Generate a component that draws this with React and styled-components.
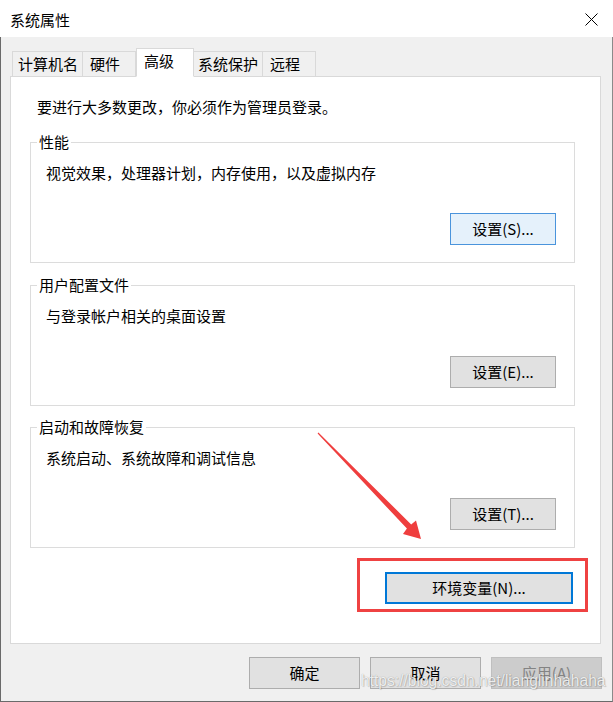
import React from "react";
import styled, { createGlobalStyle } from "styled-components";

const GlobalStyle = createGlobalStyle`
  html, body {
    margin: 0;
    padding: 0;
    background: #ffffff;
  }
  * {
    box-sizing: border-box;
  }
`;

const FONT = `"Noto Sans CJK SC", "Noto Sans", sans-serif`;

const Window = styled.div`
  position: relative;
  width: 613px;
  height: 702px;
  display: flex;
  flex-direction: column;
  font-family: ${FONT};
  font-size: 15px;
  color: #000;
  overflow: hidden;
`;

const TitleBar = styled.div`
  height: 37px;
  flex: none;
  display: flex;
  align-items: center;
  justify-content: space-between;
  padding: 2px 15px 0 10px;
  background: #ffffff;
  line-height: 20px;
`;

const Body = styled.div`
  flex: 1;
  display: flex;
  flex-direction: column;
  background: #f0f0f0;
  padding: 11px 11px 0 9px;
  border-left: 1px solid #6a6a6a;
  border-right: 1px solid #8a8a8a;
  border-bottom: 1px solid #6a6a6a;
`;

const TabRow = styled.div`
  display: flex;
  align-items: flex-end;
  height: 29px;
  margin: 0 0 -1px 2px;
  position: relative;
  z-index: 1;
`;

const Tab = styled.div`
  width: ${(p) => p.$w}px;
  height: ${(p) => (p.$active ? 29 : 26)}px;
  padding-left: ${(p) => p.$pl}px;
  padding-bottom: ${(p) => (p.$active ? 3 : 1)}px;
  display: flex;
  align-items: center;
  line-height: 20px;
  background: ${(p) => (p.$active ? "#ffffff" : "#f0f0f0")};
  border: 1px solid #d9d9d9;
  border-left-width: ${(p) => (p.$first || p.$active ? 1 : 0)}px;
  border-bottom-color: ${(p) => (p.$active ? "#ffffff" : "#d9d9d9")};
  white-space: nowrap;
`;

const Panel = styled.div`
  height: 568px;
  flex: none;
  background: #ffffff;
  border: 1px solid #d9d9d9;
  padding: 20px 12px 0 19px;
  display: flex;
  flex-direction: column;
`;

const Notice = styled.div`
  line-height: 20px;
  margin-left: 7px;
`;

const GroupBox = styled.div`
  position: relative;
  width: 545px;
  height: 121px;
  margin-top: ${(p) => p.$mt}px;
  border: 1px solid #dcdcdc;
  padding: 20px 18px 0 15px;
  display: flex;
  flex-direction: column;
  align-items: flex-start;
`;

const Legend = styled.span`
  position: absolute;
  top: -11px;
  left: 6px;
  padding: 0 2px;
  background: #ffffff;
  line-height: 20px;
`;

const Desc = styled.div`
  line-height: 20px;
`;

const Button = styled.button`
  width: ${(p) => p.$w}px;
  height: 32px;
  padding: 0;
  font-family: ${FONT};
  font-size: 15px;
  line-height: 20px;
  color: ${(p) => (p.$disabled ? "#838383" : "#000000")};
  background: ${(p) =>
    p.$hover ? "#e5f1fb" : p.$disabled ? "#cccccc" : "#e1e1e1"};
  border: ${(p) =>
    p.$focus
      ? "2px solid #0078d7"
      : p.$hover
      ? "1px solid #4a94dc"
      : p.$disabled
      ? "1px solid #bfbfbf"
      : "1px solid #adadad"};
  align-self: flex-end;
  margin-top: ${(p) => p.$mt || 0}px;
  cursor: default;
`;

const EnvRow = styled.div`
  display: flex;
  justify-content: flex-end;
  margin-top: 10px;
`;

const Highlight = styled.div`
  width: 231px;
  height: 54px;
  border: 3px solid #ef4242;
  padding: 5px 12px 5px 25px;
  display: flex;
  align-items: center;
  justify-content: flex-end;
`;

const Footer = styled.div`
  display: flex;
  justify-content: flex-end;
  gap: 10px;
  margin: 13px -1px 0 0;
`;

const Watermark = styled.div`
  position: absolute;
  left: 361px;
  top: 671px;
  font-family: "Liberation Sans", Arial, sans-serif;
  font-size: 15.6px;
  line-height: 20px;
  color: rgba(255, 255, 255, 0.85);
  text-shadow: 0 0 1px rgba(0, 0, 0, 0.35), 1px 1px 1px rgba(0, 0, 0, 0.15);
  pointer-events: none;
  white-space: nowrap;
`;

const Overlay = styled.svg`
  position: absolute;
  left: 0;
  top: 0;
  pointer-events: none;
`;

const CloseIcon = () => (
  <svg width="13" height="13" viewBox="0 0 13 13">
    <path d="M0.5 0.5 L12.5 12.5 M12.5 0.5 L0.5 12.5" stroke="#000" strokeWidth="1" />
  </svg>
);

const tabs = [
  { label: "计算机名", w: 71, pl: 5 },
  { label: "硬件", w: 53, pl: 7 },
  { label: "高级", w: 58, pl: 7, active: true },
  { label: "系统保护", w: 69, pl: 4 },
  { label: "远程", w: 53, pl: 7 },
];

const groups = [
  { title: "性能", desc: "视觉效果，处理器计划，内存使用，以及虚拟内存", btn: "设置(S)...", mt: 25, hover: true },
  { title: "用户配置文件", desc: "与登录帐户相关的桌面设置", btn: "设置(E)...", mt: 22 },
  { title: "启动和故障恢复", desc: "系统启动、系统故障和调试信息", btn: "设置(T)...", mt: 21 },
];

export default function App() {
  return (
    <>
      <GlobalStyle />
      <Window>
        <TitleBar>
          <span>系统属性</span>
          <CloseIcon />
        </TitleBar>
        <Body>
          <TabRow>
            {tabs.map((t, i) => (
              <Tab key={t.label} $w={t.w} $pl={t.pl} $active={t.active} $first={i === 0}>
                {t.label}
              </Tab>
            ))}
          </TabRow>
          <Panel>
            <Notice>要进行大多数更改，你必须作为管理员登录。</Notice>
            {groups.map((g) => (
              <GroupBox key={g.title} $mt={g.mt}>
                <Legend>{g.title}</Legend>
                <Desc>{g.desc}</Desc>
                <Button $w={106} $mt={30} $hover={g.hover}>
                  {g.btn}
                </Button>
              </GroupBox>
            ))}
            <EnvRow>
              <Highlight>
                <Button $w={188} $focus>
                  环境变量(N)...
                </Button>
              </Highlight>
            </EnvRow>
          </Panel>
          <Footer>
            <Button $w={111}>确定</Button>
            <Button $w={111}>取消</Button>
            <Button $w={111} $disabled>
              应用(A)
            </Button>
          </Footer>
        </Body>
        <Overlay width="613" height="702" viewBox="0 0 613 702">
          <polygon
            points="317.6,433.4 406.9,528.6 403,534 421,539 416,520.5 411.2,524.4 318.4,432.6"
            fill="#ef3e3e"
          />
        </Overlay>
        <Watermark>https://blog.csdn.net/lianglinhahaha</Watermark>
      </Window>
    </>
  );
}
